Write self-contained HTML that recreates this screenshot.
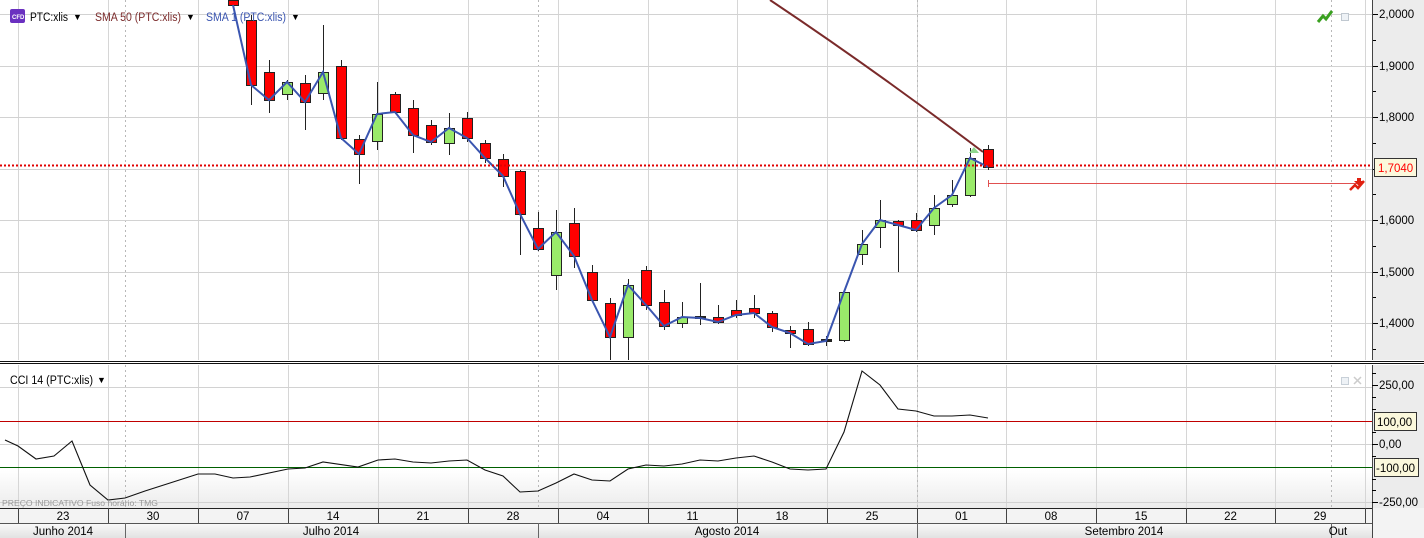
<!DOCTYPE html>
<html><head><meta charset="utf-8"><style>
html,body{margin:0;padding:0;width:1424px;height:538px;overflow:hidden;background:#fff;font-family:"Liberation Sans",sans-serif}
svg{display:block}
text{font-family:"Liberation Sans",sans-serif}
</style></head><body>
<div id="c"></div>
<script>
const W=1424,H=538;
let s=`<svg xmlns="http://www.w3.org/2000/svg" width="${W}" height="${H}" viewBox="0 0 ${W} ${H}">`;
s+=`<defs><linearGradient id="bg" x1="0" y1="0" x2="0" y2="1"><stop offset="0" stop-color="#fff"/><stop offset="1" stop-color="#ececec"/></linearGradient>
<linearGradient id="ax" x1="0" y1="0" x2="0" y2="1"><stop offset="0" stop-color="#fafafa"/><stop offset="1" stop-color="#e2e2e2"/></linearGradient></defs>`;
s+=`<rect x="0" y="0" width="${W}" height="${H}" fill="#fff"/>`;
s+=`<rect x="1372" y="0" width="52" height="508" fill="#ececec"/>`;
s+=`<rect x="0" y="470" width="1372" height="38" fill="url(#bg)"/>`;
const vx=[18,108,198,288,378,468,558,648,737,827,917,1006,1096,1186,1275,1365];
vx.forEach(x=>{s+=`<line x1="${x}.5" y1="0" x2="${x}.5" y2="508" stroke="#d6d6d6"/>`});
[125,538,917,1331].forEach(x=>{s+=`<line x1="${x}.5" y1="0" x2="${x}.5" y2="508" stroke="#b8b8b8" stroke-dasharray="2,3"/>`});
const py=p=>14+(2.0-p)*515;
[2.0,1.9,1.8,1.7,1.6,1.5,1.4].forEach(p=>{const y=Math.round(py(p));s+=`<line x1="0" y1="${y}.5" x2="1372" y2="${y}.5" stroke="#d2d2d2"/>`;
s+=`<line x1="1372" y1="${y}.5" x2="1378" y2="${y}.5" stroke="#000"/><text x="1379" y="${y+4}" font-size="11.5" fill="#000">${p.toFixed(4).replace('.',',')}</text>`;});
[1.95,1.85,1.75,1.65,1.55,1.45,1.35].forEach(p=>{const y=Math.round(py(p));s+=`<line x1="1372" y1="${y}.5" x2="1376" y2="${y}.5" stroke="#000"/>`});
s+=`<line x1="1372.5" y1="0" x2="1372.5" y2="508" stroke="#444"/>`;
s+=`<path d="M770,0 Q872,68 983,152" fill="none" stroke="#7a2a2a" stroke-width="2"/>`;
const C=[[233,0,5,0,6,'r'],[251,20,85,15,105,'r'],[269,72,100,60,113,'r'],[287,82,94,80,100,'g'],[305,83,102,75,130,'r'],[323,72,93,25,100,'g'],[341,66,138,60,140,'r'],[359,139,154,135,184,'r'],[377,114,141,82,150,'g'],[395,94,112,92,114,'r'],[413,108,135,100,153,'r'],[431,125,142,120,145,'r'],[449,128,143,113,155,'g'],[467,118,138,112,142,'r'],[485,143,158,140,163,'r'],[503,159,176,154,187,'r'],[520,171,214,170,255,'r'],[538,228,249,212,251,'r'],[556,232,275,210,290,'g'],[574,223,256,208,268,'r'],[592,272,300,265,302,'r'],[610,303,337,298,360,'r'],[628,285,337,279,360,'g'],[646,270,305,266,310,'r'],[664,302,326,290,330,'r'],[682,317,323,302,328,'g'],[700,316,318,283,325,'n'],[718,317,322,305,324,'r'],[736,310,315,300,318,'r'],[754,308,313,295,318,'r'],[772,313,327,311,332,'r'],[790,330,333,326,348,'r'],[808,329,344,322,346,'r'],[826,339,341,336,346,'n'],[844,292,340,290,342,'g'],[862,244,254,230,265,'g'],[880,220,227,200,248,'g'],[898,221,225,220,272,'r'],[916,220,230,213,232,'r'],[934,208,225,195,235,'g'],[952,195,204,180,207,'g'],[970,158,195,148,197,'g'],[988,149,167,145,170,'r']];
let blue=[];
C.forEach(c=>{const [x,t,b,wt,wb,col]=c;
s+=`<line x1="${x}.5" y1="${wt}" x2="${x}.5" y2="${wb}" stroke="#222"/>`;
const f=col=='r'?'#ff0000':col=='g'?'#9aea6a':'#222';
s+=`<rect x="${x-5}.5" y="${t}.5" width="10" height="${Math.max(b-t,1)}" fill="${f}" stroke="#222"/>`;
blue.push([x,col=='g'?t:b]);});
s+=`<polyline points="${blue.map(p=>p.join(',')).join(' ')}" fill="none" stroke="#3a55b0" stroke-width="2"/>`;
s+=`<polygon points="969,153 974,147 979,153" fill="#8fd88f"/>`;
s+=`<line x1="0" y1="165.5" x2="1372" y2="165.5" stroke="#e00000" stroke-width="2" stroke-dasharray="2,2"/>`;
s+=`<rect x="1374.5" y="158.5" width="42" height="18" fill="#fbf8dc" stroke="#333"/><text x="1378" y="172" font-size="11.5" fill="#ff0000">1,7040</text>`;
s+=`<line x1="988" y1="183.5" x2="1360" y2="183.5" stroke="#e05050"/><line x1="988.5" y1="180" x2="988.5" y2="187" stroke="#e05050"/>`;
s+=`<path d="M1350,190 l5,-5 l3,3 l6,-7" fill="none" stroke="#e02010" stroke-width="2.5"/><path d="M1357,178 l4,0 l0,3 l3,0 l-5,5 l-5,-5 l3,0z" fill="#e02010"/>`;
s+=`<path d="M1318,22 l5,-6 l3,3 l6,-8" fill="none" stroke="#3aa020" stroke-width="3"/>`;
s+=`<rect x="1341.5" y="13.5" width="7" height="7" fill="#eef2f6" stroke="#c0c8d0"/>`;
s+=`<rect x="10" y="9" width="15" height="14" rx="2" fill="#6a30c0"/><text x="12" y="19" font-size="6" fill="#fff" font-weight="bold">CFD</text>`;
s+=`<text x="30" y="21" font-size="11.5" fill="#000" textLength="38" lengthAdjust="spacingAndGlyphs">PTC:xlis</text><text x="73" y="20" font-size="9">▼</text>`;
s+=`<text x="95" y="21" font-size="11.5" fill="#7a2a2a" textLength="86" lengthAdjust="spacingAndGlyphs">SMA 50 (PTC:xlis)</text><text x="186" y="20" font-size="9">▼</text>`;
s+=`<text x="206" y="21" font-size="11.5" fill="#3a55b0" textLength="80" lengthAdjust="spacingAndGlyphs">SMA 1 (PTC:xlis)</text><text x="291" y="20" font-size="9">▼</text>`;
s+=`<rect x="0" y="360" width="1424" height="5" fill="#fff"/><line x1="0" y1="361.5" x2="1424" y2="361.5" stroke="#111"/><line x1="0" y1="363.5" x2="1424" y2="363.5" stroke="#111"/>`;
const cy=v=>444-v*0.23;
[250,0,-250].forEach(v=>{const y=Math.round(cy(v));s+=`<line x1="0" y1="${y}.5" x2="1372" y2="${y}.5" stroke="#d2d2d2"/>`;});
s+=`<line x1="0" y1="421.5" x2="1372" y2="421.5" stroke="#c00000"/><line x1="0" y1="467.5" x2="1372" y2="467.5" stroke="#006000"/>`;
[[385,'250,00'],[444,'0,00'],[502,'-250,00']].forEach(a=>{s+=`<line x1="1372" y1="${a[0]}.5" x2="1378" y2="${a[0]}.5" stroke="#000"/><text x="1379" y="${a[0]+4}" font-size="11.5">${a[1]}</text>`});
[373,397,409,432,456,479,490].forEach(y=>{s+=`<line x1="1372" y1="${y}.5" x2="1376" y2="${y}.5" stroke="#000"/>`});
s+=`<rect x="1374.5" y="412.5" width="42" height="18" fill="#fbf8dc" stroke="#333"/><text x="1377" y="426" font-size="11.5">100,00</text>`;
s+=`<rect x="1374.5" y="458.5" width="44" height="18" fill="#fbf8dc" stroke="#333"/><text x="1376" y="472" font-size="11.5">-100,00</text>`;
const P=[[5,440],[18,446],[36,459],[54,456],[72,441],[90,485],[108,500],[125,498],[145,491],[170,483],[198,474],[215,474],[233,478],[250,477],[288,469],[305,468],[323,462],[358,467],[378,460],[395,459],[413,462],[431,463],[449,461],[467,460],[485,470],[503,476],[520,492],[538,491],[556,483],[574,474],[592,480],[610,481],[628,469],[646,465],[664,466],[682,464],[700,460],[718,461],[736,458],[754,456],[772,462],[790,469],[808,470],[826,469],[844,432],[862,371],[880,385],[898,409],[916,411],[934,416],[952,416],[970,415],[988,418]];
s+=`<polyline points="${P.map(p=>p.join(',')).join(' ')}" fill="none" stroke="#111" stroke-width="1.1"/>`;
s+=`<text x="10" y="384" font-size="11.5" textLength="83" lengthAdjust="spacingAndGlyphs">CCI 14 (PTC:xlis)</text><text x="97" y="383" font-size="9">▼</text>`;
s+=`<rect x="1341.5" y="377.5" width="7" height="7" fill="#eef2f6" stroke="#c8d0d8"/><path d="M1354,377 l7,7 M1361,377 l-7,7" stroke="#ccc" stroke-width="1.5"/>`;
s+=`<text x="2" y="506" font-size="8.5" fill="#999" textLength="156" lengthAdjust="spacingAndGlyphs">PREÇO INDICATIVO    Fuso horário: TMG</text>`;
s+=`<rect x="0" y="508" width="1424" height="30" fill="#f3f3f3"/><rect x="0" y="523" width="1372" height="15" fill="url(#ax)"/>`;
s+=`<line x1="0" y1="508.5" x2="1372" y2="508.5" stroke="#222"/><line x1="0" y1="523.5" x2="1372" y2="523.5" stroke="#555"/>`;
const wk=['23','30','07','14','21','28','04','11','18','25','01','08','15','22','29'];
vx.forEach(x=>{s+=`<line x1="${x}.5" y1="508" x2="${x}.5" y2="523" stroke="#444"/>`});
wk.forEach((w,i)=>{const x=(vx[i]+vx[i+1])/2;s+=`<text x="${x}" y="520" font-size="11.5" text-anchor="middle">${w}</text>`});
[125,538,917,1331].forEach(x=>{s+=`<line x1="${x}.5" y1="523" x2="${x}.5" y2="538" stroke="#666"/>`});
[[63,'Junho 2014'],[331,'Julho 2014'],[727,'Agosto 2014'],[1124,'Setembro 2014'],[1338,'Out']].forEach(a=>{s+=`<text x="${a[0]}" y="535" font-size="11.5" text-anchor="middle">${a[1]}</text>`});
s+=`<line x1="1372.5" y1="508" x2="1372.5" y2="538" stroke="#444"/>`;
s+=`</svg>`;
document.getElementById('c').innerHTML=s;
</script>
</body></html>
